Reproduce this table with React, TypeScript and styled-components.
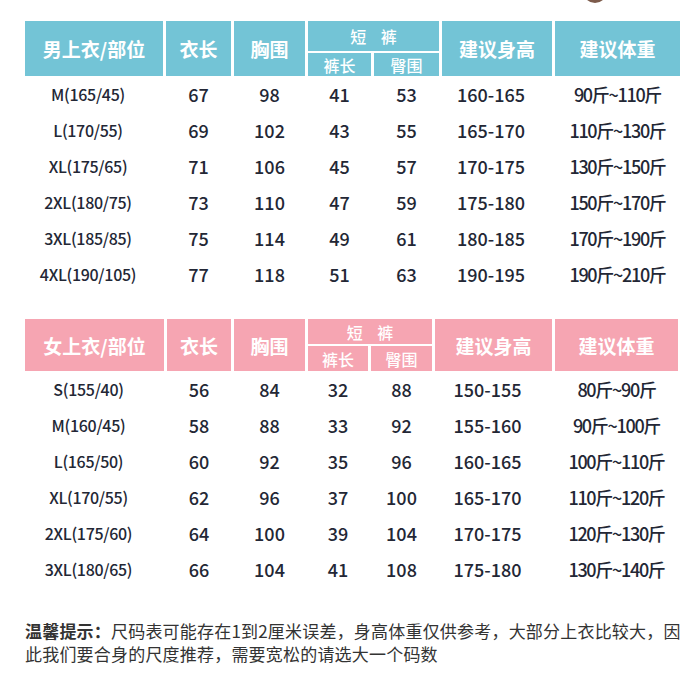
import React from "react";
import styled, { createGlobalStyle } from "styled-components";

const GlobalStyle = createGlobalStyle`
  body {
    margin: 0;
    background: #ffffff;
    font-family: "Noto Sans CJK SC", "Noto Sans", sans-serif;
  }
`;

type Theme = {
  color: string;
  cols: string;
  rows: string;
};

const blue: Theme = {
  color: "#73c4d6",
  cols: "138px 65px 71px 63px 65px 110px 125px",
  rows: "30px 23px",
};

const pink: Theme = {
  color: "#f6a5b2",
  cols: "139px 64px 71px 60px 61px 117px 123px",
  rows: "25px 25px",
};

const Page = styled.div`
  position: relative;
  width: 700px;
  height: 700px;
  padding: 21px 0 0 25px;
  box-sizing: border-box;
  overflow: hidden;
`;

const Dot = styled.div`
  position: absolute;
  left: 583px;
  top: -21px;
  width: 24px;
  height: 24px;
  border-radius: 50%;
  background: #7d5b4b;
`;

const Table = styled.section<{ $gapTop?: number }>`
  margin-top: ${(p) => p.$gapTop ?? 0}px;
`;

const Head = styled.div<{ $cols: string; $rows: string }>`
  display: grid;
  grid-template-columns: ${(p) => p.$cols};
  grid-template-rows: ${(p) => p.$rows};
  column-gap: 3px;
  row-gap: 2px;
`;

const HeadCell = styled.div<{ $bg: string; $col?: string; $row?: string; $small?: boolean }>`
  grid-column: ${(p) => p.$col ?? "auto"};
  grid-row: ${(p) => p.$row ?? "1 / span 2"};
  background: ${(p) => p.$bg};
  color: #ffffff;
  display: flex;
  align-items: center;
  justify-content: center;
  font-size: ${(p) => (p.$small ? "16px" : "19px")};
  font-weight: ${(p) => (p.$small ? 500 : 700)};
  white-space: pre;
`;

const Row = styled.div<{ $cols: string }>`
  display: grid;
  grid-template-columns: ${(p) => p.$cols};
  column-gap: 3px;
  height: 36px;
  align-items: center;
`;

const Cell = styled.div<{ $first?: boolean; $weight?: boolean; $shift?: number }>`
  text-align: center;
  font-size: ${(p) => (p.$first ? "16px" : "18px")};
  font-weight: 500;
  letter-spacing: ${(p) => (p.$weight ? "-1.3px" : p.$first ? "-0.3px" : "0")};
  color: #232735;
  padding-right: ${(p) => p.$shift ?? 0}px;
  white-space: nowrap;
`;

const Note = styled.div`
  margin-top: 32px;
  font-size: 17px;
  line-height: 23px;
  color: #333333;
  letter-spacing: 0.2px;
`;

const Line = styled.div`
  white-space: nowrap;
`;

const Strong = styled.span`
  font-weight: 700;
`;

const men = [
  ["M(165/45)", "67", "98", "41", "53", "160-165", "90斤~110斤"],
  ["L(170/55)", "69", "102", "43", "55", "165-170", "110斤~130斤"],
  ["XL(175/65)", "71", "106", "45", "57", "170-175", "130斤~150斤"],
  ["2XL(180/75)", "73", "110", "47", "59", "175-180", "150斤~170斤"],
  ["3XL(185/85)", "75", "114", "49", "61", "180-185", "170斤~190斤"],
  ["4XL(190/105)", "77", "118", "51", "63", "190-195", "190斤~210斤"],
];

const women = [
  ["S(155/40)", "56", "84", "32", "88", "150-155", "80斤~90斤"],
  ["M(160/45)", "58", "88", "33", "92", "155-160", "90斤~100斤"],
  ["L(165/50)", "60", "92", "35", "96", "160-165", "100斤~110斤"],
  ["XL(170/55)", "62", "96", "37", "100", "165-170", "110斤~120斤"],
  ["2XL(175/60)", "64", "100", "39", "104", "170-175", "120斤~130斤"],
  ["3XL(180/65)", "66", "104", "41", "108", "175-180", "130斤~140斤"],
];

const SizeTable: React.FC<{ title: string; theme: Theme; data: string[][]; gapTop?: number }> = ({
  title,
  theme,
  data,
  gapTop,
}) => (
  <Table $gapTop={gapTop}>
    <Head $cols={theme.cols} $rows={theme.rows}>
      <HeadCell $bg={theme.color} $col="1">{title}</HeadCell>
      <HeadCell $bg={theme.color} $col="2">衣长</HeadCell>
      <HeadCell $bg={theme.color} $col="3">胸围</HeadCell>
      <HeadCell $bg={theme.color} $col="4 / span 2" $row="1" $small>
        {"短    裤"}
      </HeadCell>
      <HeadCell $bg={theme.color} $col="4" $row="2" $small>裤长</HeadCell>
      <HeadCell $bg={theme.color} $col="5" $row="2" $small>臀围</HeadCell>
      <HeadCell $bg={theme.color} $col="6">建议身高</HeadCell>
      <HeadCell $bg={theme.color} $col="7">建议体重</HeadCell>
    </Head>
    {data.map((r) => (
      <Row key={r[0]} $cols={theme.cols}>
        <Cell $first $shift={12}>{r[0]}</Cell>
        <Cell>{r[1]}</Cell>
        <Cell>{r[2]}</Cell>
        <Cell>{r[3]}</Cell>
        <Cell>{r[4]}</Cell>
        <Cell $shift={12}>{r[5]}</Cell>
        <Cell $weight>{r[6]}</Cell>
      </Row>
    ))}
  </Table>
);

export default function App() {
  return (
    <>
      <GlobalStyle />
      <Page>
        <Dot />
        <SizeTable title="男上衣/部位" theme={blue} data={men} />
        <SizeTable title="女上衣/部位" theme={pink} data={women} gapTop={27} />
        <Note>
          <Line>
            <Strong>温馨提示：</Strong>尺码表可能存在1到2厘米误差，身高体重仅供参考，大部分上衣比较大，因
          </Line>
          <Line>此我们要合身的尺度推荐，需要宽松的请选大一个码数</Line>
        </Note>
      </Page>
    </>
  );
}
